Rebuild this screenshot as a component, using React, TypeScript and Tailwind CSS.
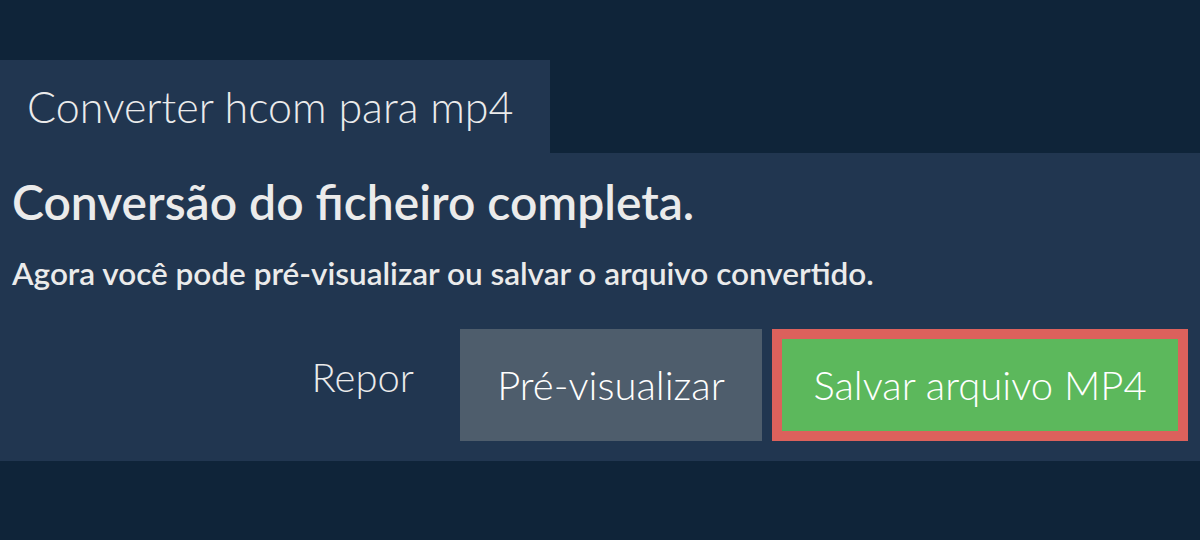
export default function App() {
  return (
    <div className="h-[540px] w-[1200px] bg-[#0f2439] font-['Lato',sans-serif] text-[#ebebeb]">
      <div className="h-[60px]" />
      <div className="flex">
        <div className="flex h-[93px] w-[550px] items-center bg-[#213650] pl-[27px]">
          <span className="text-[43px] font-light leading-none">Converter hcom para mp4</span>
        </div>
      </div>
      <section className="flex h-[308px] flex-col bg-[#213650] px-[12px]">
        <h1 className="mt-[25px] text-[48px] font-semibold leading-none">Conversão do ficheiro completa.</h1>
        <p className="mt-[32px] text-[31.5px] font-semibold leading-none">Agora você pode pré-visualizar ou salvar o arquivo convertido.</p>
        <div className="mt-[39px] flex items-center justify-end gap-[10px]">
          <button className="flex h-[112px] items-center px-[36px] pb-[16px] text-[40px] font-light text-[#ebebeb]">Repor</button>
          <button className="flex h-[112px] w-[302px] items-center justify-center bg-[#4e5d6c] text-[40px] font-light text-white">
            Pré-visualizar
          </button>
          <button className="flex h-[112px] w-[416px] items-center justify-center border-[10px] border-[#dc615c] bg-[#5cb85c] text-[40px] font-light text-white">
            Salvar arquivo MP4
          </button>
        </div>
      </section>
    </div>
  );
}
